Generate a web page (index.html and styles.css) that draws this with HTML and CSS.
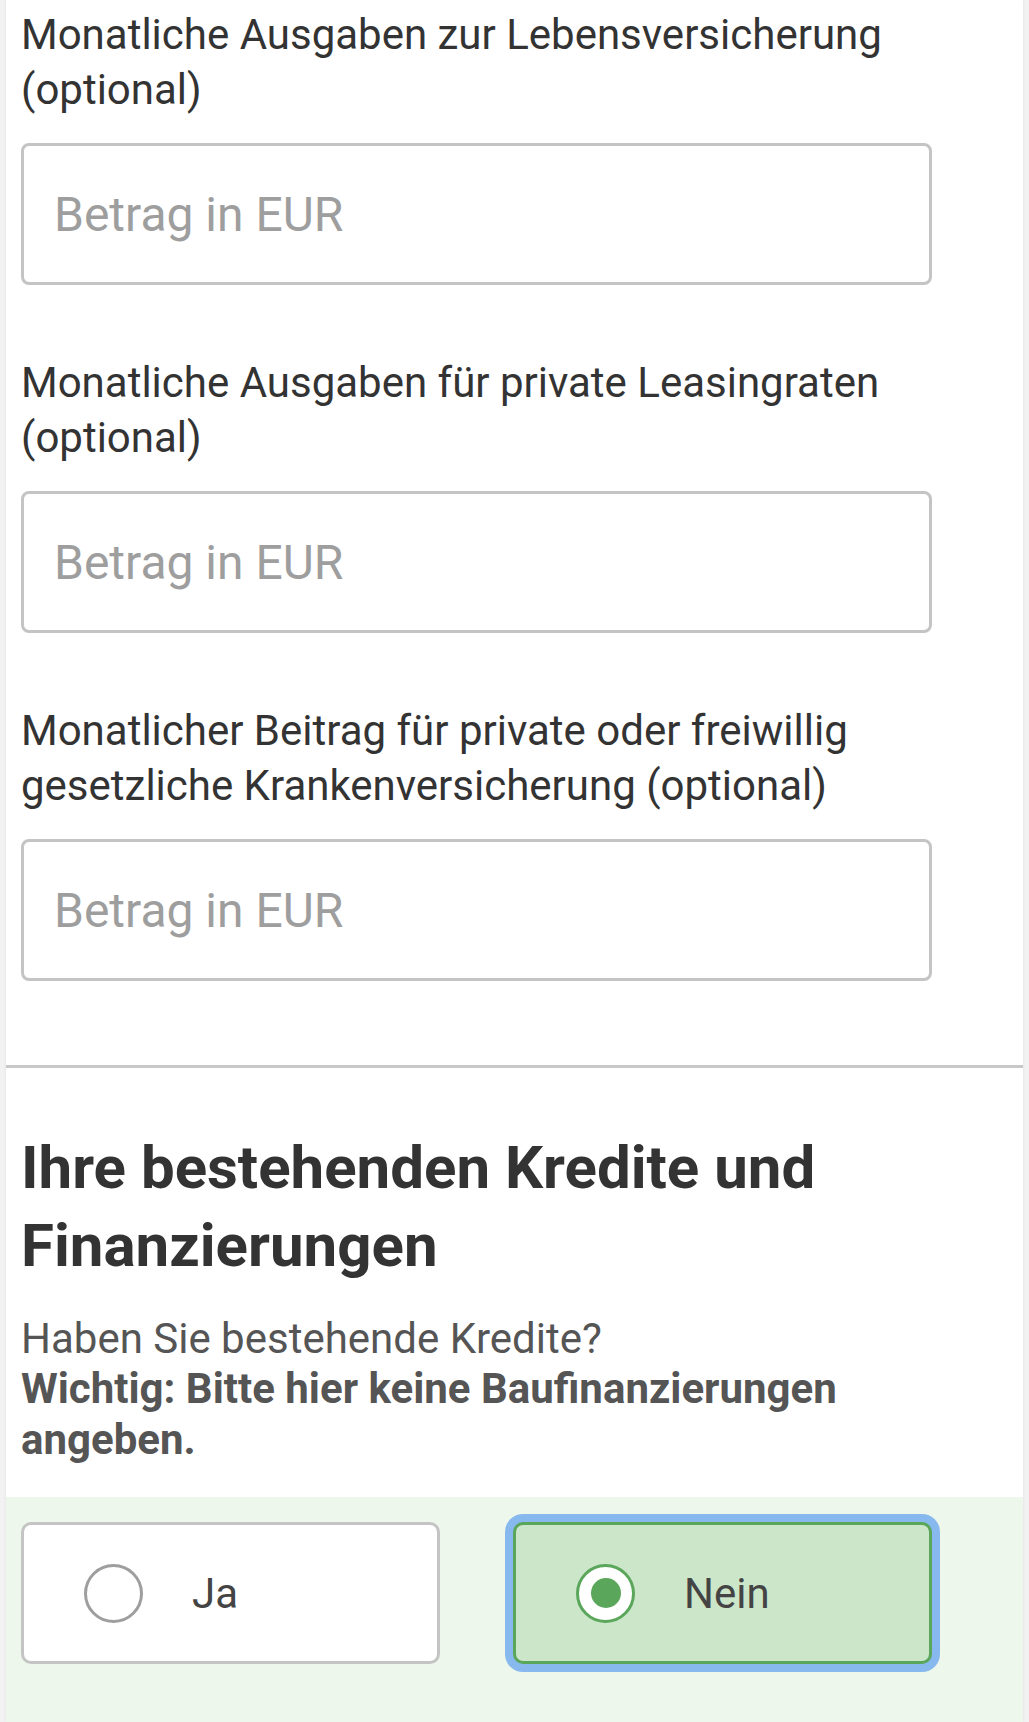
FILE: index.html
```html
<!DOCTYPE html>
<html lang="de">
<head>
<meta charset="utf-8">
<title>Ausgaben</title>
<link rel="stylesheet" href="styles.css">
</head>
<body>
<div class="panel">
  <div class="fields">
    <div class="field">
      <label class="label">Monatliche Ausgaben zur Lebensversicherung (optional)</label>
      <div class="input"><span class="placeholder">Betrag in EUR</span></div>
    </div>
    <div class="field">
      <label class="label">Monatliche Ausgaben für private Leasingraten (optional)</label>
      <div class="input"><span class="placeholder">Betrag in EUR</span></div>
    </div>
    <div class="field">
      <label class="label">Monatlicher Beitrag für private oder freiwillig gesetzliche Krankenversicherung (optional)</label>
      <div class="input"><span class="placeholder">Betrag in EUR</span></div>
    </div>
  </div>
  <hr class="divider">
  <div class="section">
    <h2 class="heading">Ihre bestehenden Kredite und Finanzierungen</h2>
    <p class="question">Haben Sie bestehende Kredite?<br><strong>Wichtig: Bitte hier keine Baufinanzierungen angeben.</strong></p>
  </div>
  <div class="choices">
    <div class="choice">
      <span class="radio"></span>
      <span class="choice-text">Ja</span>
    </div>
    <div class="choice selected">
      <span class="radio"><span class="dot"></span></span>
      <span class="choice-text">Nein</span>
    </div>
  </div>
</div>
</body>
</html>
```
FILE: styles.css
```css
html, body {
  margin: 0;
  padding: 0;
}
body {
  background: #f2f2f2;
  font-family: Roboto, "Liberation Sans", Arial, sans-serif;
  color: #333;
}
.panel {
  margin-left: 6px;
  width: 1017px;
  min-height: 1722px;
  background: #fff;
  box-shadow: 0 0 3px rgba(0, 0, 0, 0.08);
  display: flex;
  flex-direction: column;
}
.fields {
  padding: 7px 0 0 15px;
  width: 911px;
  display: flex;
  flex-direction: column;
  gap: 70px;
}
.field {
  display: flex;
  flex-direction: column;
}
.label {
  font-size: 42px;
  line-height: 55px;
  color: #333;
  margin-bottom: 26px;
}
.input {
  box-sizing: border-box;
  height: 142px;
  border: 3px solid #c4c4c4;
  border-radius: 8px;
  padding-left: 30px;
  display: flex;
  align-items: center;
}
.placeholder {
  font-size: 48px;
  color: #9e9e9e;
}
.divider {
  margin: 84px 0 0 0;
  border: 0;
  height: 3px;
  background: #c8c8c8;
}
.section {
  padding: 61px 0 0 15px;
  width: 910px;
}
.heading {
  margin: 0;
  font-size: 60px;
  line-height: 78px;
  font-weight: 700;
  color: #333;
}
.question {
  margin: 29px 0 0 0;
  font-size: 42px;
  line-height: 50.4px;
  color: #555;
}
.question strong {
  font-weight: 700;
}
.choices {
  margin-top: 32px;
  flex: 1;
  background: #eef7ec;
  padding: 25px 0 0 15px;
  display: grid;
  grid-template-columns: 419px 419px;
  column-gap: 73px;
  align-content: start;
}
.choice {
  box-sizing: border-box;
  height: 142px;
  border: 3px solid #c4c4c4;
  border-radius: 10px;
  background: #fff;
  display: flex;
  align-items: center;
  padding-left: 60px;
  gap: 49px;
}
.choice.selected {
  border-color: #5aa65a;
  background: #cce6ca;
  box-shadow: 0 0 0 8px #88b9ee;
  padding-left: 60px;
}
.radio {
  box-sizing: border-box;
  width: 59px;
  height: 59px;
  border: 3px solid #9e9e9e;
  border-radius: 50%;
  background: #fff;
  display: flex;
  align-items: center;
  justify-content: center;
  flex-shrink: 0;
}
.selected .radio {
  border-color: #5aa65a;
}
.dot {
  width: 30px;
  height: 30px;
  border-radius: 50%;
  background: #5aa65a;
}
.choice-text {
  font-size: 42px;
  color: #444;
}
```
